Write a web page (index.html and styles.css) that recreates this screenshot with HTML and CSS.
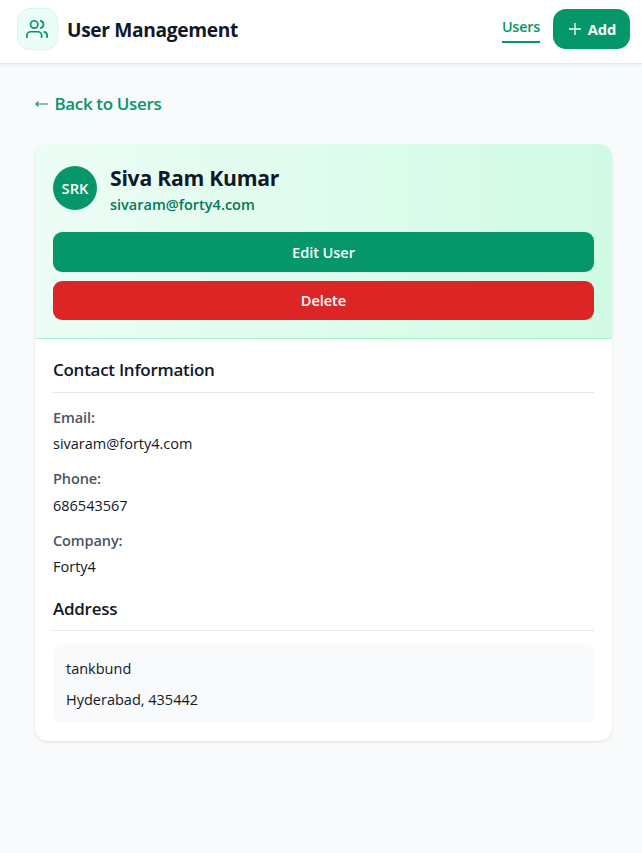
FILE: index.html
```html
<!DOCTYPE html>
<html lang="en">
<head>
<meta charset="utf-8">
<title>User Management</title>
<link rel="stylesheet" href="styles.css">
</head>
<body>
<header class="topbar">
  <div class="brand">
    <div class="logo">
      <svg width="22" height="22" viewBox="0 0 24 24" fill="none" stroke="currentColor" stroke-width="1.9" stroke-linecap="round" stroke-linejoin="round"><circle cx="9" cy="7" r="4"/><path d="M1 21v-2a4 4 0 0 1 4-4h8a4 4 0 0 1 4 4v2M23 21v-2a4 4 0 0 0-3-3.87M16 3.13a4 4 0 0 1 0 7.75"/></svg>
    </div>
    <h1 class="title">User Management</h1>
  </div>
  <nav class="nav">
    <a class="nav-link">Users</a>
    <button class="add"><svg width="12" height="12" viewBox="0 0 12 12" stroke="currentColor" stroke-width="1.3"><path d="M6 0v12M0 6h12"/></svg><span>Add</span></button>
  </nav>
</header>
<main class="page">
  <a class="back"><svg width="14" height="8" viewBox="0 0 14 8" fill="none" stroke="currentColor" stroke-width="1.1"><path d="M13 4H1M3.5 1.5L1 4l2.500 2.500"/></svg><span>Back to Users</span></a>
  <article class="card">
    <div class="card-head">
      <div class="profile">
        <div class="avatar">SRK</div>
        <div>
          <h2 class="name">Siva Ram Kumar</h2>
          <p class="mail">sivaram@forty4.com</p>
        </div>
      </div>
      <button class="btn edit">Edit User</button>
      <button class="btn delete">Delete</button>
    </div>
    <div class="card-body">
      <h3 class="section">Contact Information</h3>
      <dl class="details">
        <div class="field"><dt>Email:</dt><dd>sivaram@forty4.com</dd></div>
        <div class="field"><dt>Phone:</dt><dd>686543567</dd></div>
        <div class="field"><dt>Company:</dt><dd>Forty4</dd></div>
      </dl>
      <h3 class="section section-address">Address</h3>
      <div class="address"><p>tankbund</p><p>Hyderabad, 435442</p></div>
    </div>
  </article>
</main>
</body>
</html>
```

FILE: styles.css
```css
* { box-sizing: border-box; margin: 0; padding: 0; }
body {
  min-height: 853px;
  background: #f9fafc;
  color: #111827;
  font: 14.5px/26px "Open Sans", "Noto Sans", sans-serif;
}
button { border: 0; font-family: inherit; color: #fff; }
.topbar {
  height: 64px;
  padding: 0 12px 5px 17px;
  display: flex;
  align-items: center;
  justify-content: space-between;
  background: #fff;
  border-bottom: 1px solid #e5e7eb;
  box-shadow: 0 1px 3px rgba(0, 0, 0, .06);
}
.brand { display: flex; align-items: center; gap: 9px; }
.logo {
  width: 41px;
  height: 42px;
  padding-right: 1px;
  display: grid;
  place-items: center;
  border: 1px solid #d1fae5;
  border-radius: 13px;
  background: #ecfdf5;
  color: #059669;
}
.title { padding-top: 2px; font-size: 19.2px; font-weight: 700; line-height: 26px; letter-spacing: -.36px; }
.nav { display: flex; align-items: center; gap: 13px; }
.nav-link {
  height: 28px;
  border-bottom: 2px solid #059669;
  color: #059669;
  font-size: 14.4px;
  font-weight: 600;
  letter-spacing: -.22px;
  line-height: 24px;
}
.add {
  width: 77px;
  height: 40px;
  padding-left: 2px;
  display: flex;
  align-items: center;
  justify-content: center;
  gap: 7px;
  border-radius: 13px;
  background: #059669;
  font-size: 14.7px;
  font-weight: 700;
}
.page { padding: 27px 30px 0 35px; }
.back {
  display: flex;
  align-items: center;
  gap: 5.5px;
  color: #059669;
  font-size: 17px;
  font-weight: 600;
  letter-spacing: -.36px;
}
.card {
  width: 577px;
  height: 597px;
  margin-top: 27px;
  border-radius: 13px;
  overflow: hidden;
  background: #fff;
  box-shadow: 0 1px 3px rgba(0, 0, 0, .1);
}
.card-head {
  height: 195px;
  padding: 18px;
  border-bottom: 1px solid #a7f3d0;
  background: linear-gradient(90deg, #ecfdf5, #d1fae5);
}
.profile { height: 70px; display: flex; gap: 13px; }
.avatar {
  width: 44px;
  height: 44px;
  margin-top: 4px;
  display: grid;
  place-items: center;
  border-radius: 50%;
  background: #059669;
  color: #fff;
  font-size: 14.7px;
  font-weight: 600;
}
.name { font-size: 21.2px; font-weight: 700; line-height: 32px; letter-spacing: -.26px; }
.mail { color: #047857; font-weight: 600; line-height: 22px; }
.btn {
  width: 100%;
  height: 40px;
  display: grid;
  place-items: center;
  border-radius: 9px;
  font-size: 14.6px;
  font-weight: 600;
  letter-spacing: -.08px;
}
.edit { background: #059669; }
.delete { height: 39px; margin-top: 9px; padding-bottom: 1px; background: #dc2626; }
.card-body { padding: 16px 18px 18px; }
.section {
  height: 38px;
  border-bottom: 1px solid #e5e7eb;
  font-size: 17px;
  font-weight: 600;
  line-height: 29px;
  letter-spacing: -.27px;
}
.section-address { height: 37px; }
.details { display: grid; gap: 10px; padding: 12px 0 15px; }
.field { height: 51.3px; }
.field dt { color: #4b5563; font-weight: 600; letter-spacing: -.1px; line-height: 26.3px; }
.address {
  height: 79px;
  margin-top: 13px;
  padding: 12px 13px;
  border-radius: 9px;
  background: #f9fafb;
}
.address p + p { margin-top: 5px; }
```
